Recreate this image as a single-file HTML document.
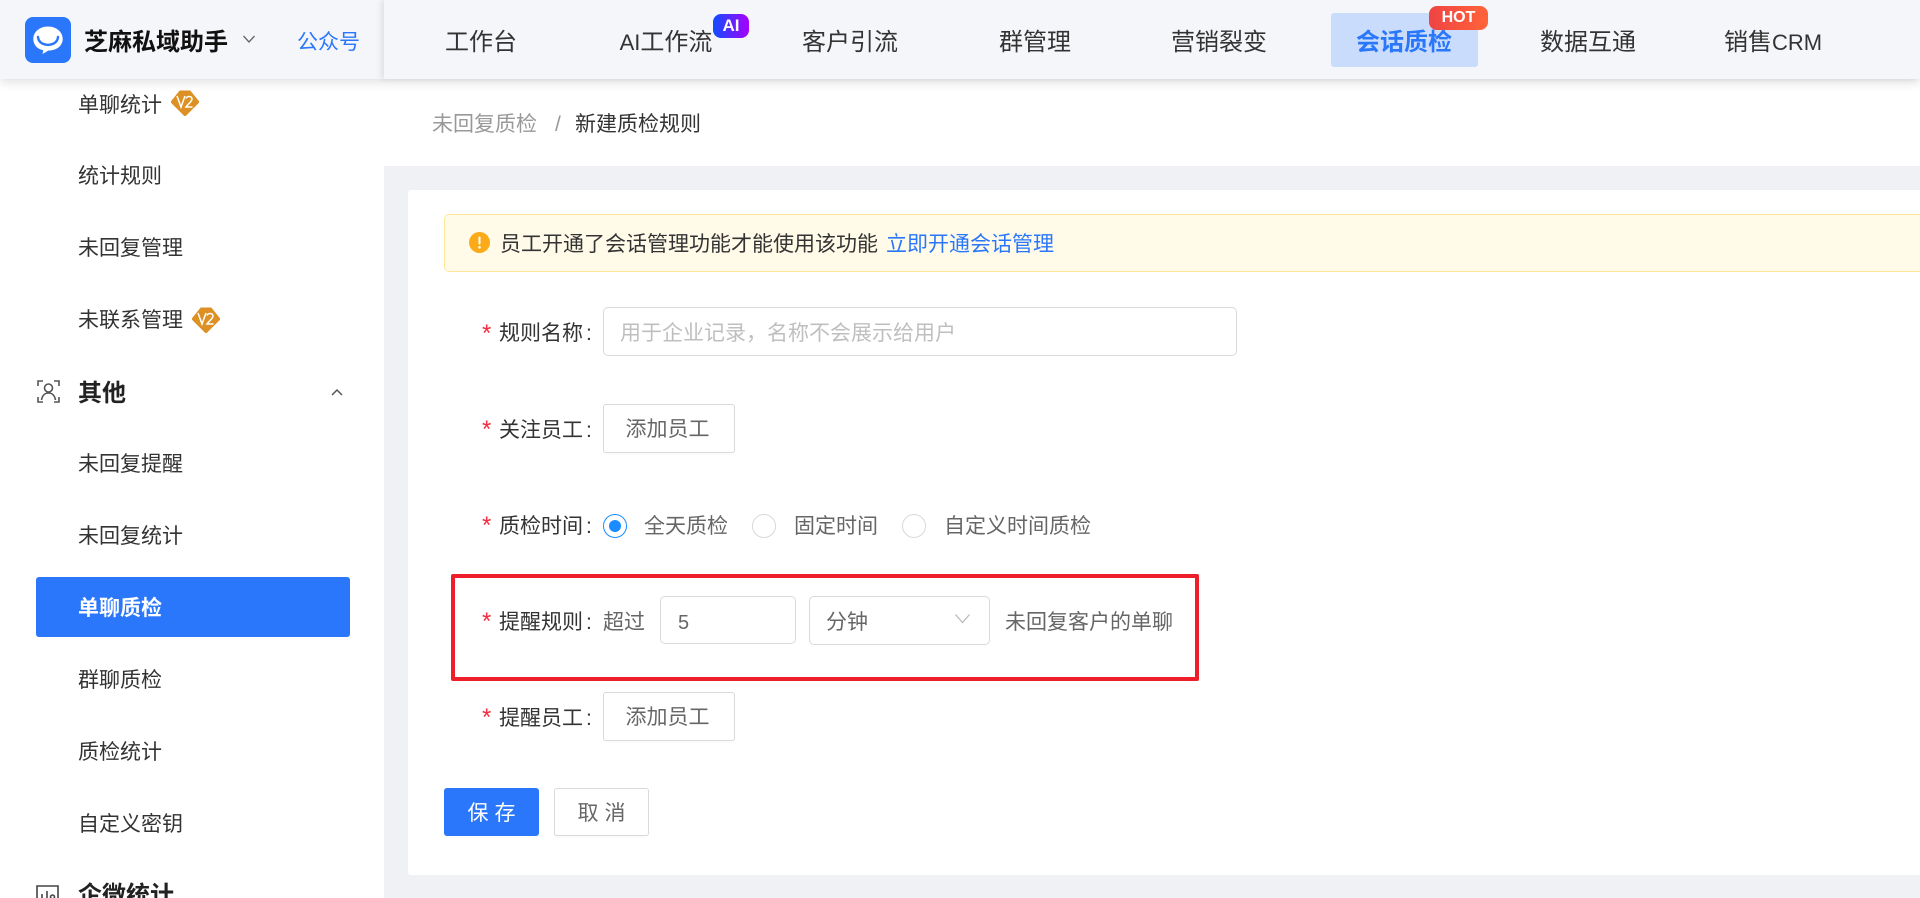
<!DOCTYPE html>
<html lang="zh">
<head>
<meta charset="utf-8">
<title>新建质检规则</title>
<style>
html,body{margin:0;padding:0;width:1920px;height:898px;overflow:hidden;background:#fff}
body{position:relative;font-family:"Liberation Sans","Noto Sans CJK SC",sans-serif;color:#333}
.t{position:absolute;white-space:nowrap;height:40px;line-height:40px;font-size:21px;margin-top:2px}
.b{position:absolute;box-sizing:border-box}
.c{text-align:center;transform:translateX(-50%)}
.nav{font-size:24px;color:#333;margin-top:1px}
.nav i{font-style:normal;font-size:22px}
.btn{position:absolute;box-sizing:border-box;background:#fff;border:1px solid #d9d9d9;border-radius:3px;color:#666;font-size:21px;text-align:center;box-shadow:0 2px 0 rgba(0,0,0,.015)}
.inp{position:absolute;box-sizing:border-box;background:#fff;border:1px solid #d9d9d9;border-radius:5px}
.star{position:absolute;color:#f5293f;font-size:24px;height:40px;line-height:47px;margin-top:-4px;font-family:"Liberation Sans",sans-serif}
.radio{position:absolute;box-sizing:border-box;width:24px;height:24px;border-radius:50%;border:1px solid #d9d9d9;background:#fff}
.l i{font-style:normal;padding-left:3px}
svg{position:absolute;display:block}
</style>
</head>
<body>

<!-- page backgrounds -->
<div class="b" style="left:384px;top:166px;width:1536px;height:732px;background:#f0f1f5"></div>
<div class="b" style="left:408px;top:190px;width:1512px;height:685px;background:#fff;border-radius:3px 0 0 3px"></div>

<!-- sidebar -->
<div class="t" style="left:78px;top:84px">单聊统计</div>
<svg style="left:171px;top:90px" width="28" height="26" viewBox="0 0 28 26"><polygon points="0,12 9,1 19,1 28,12 14,26" fill="#dd9023"/><polygon points="0,12 9,1 19,1 28,12 14,26" fill="none" stroke="#dd9023" stroke-linejoin="round" stroke-width="1"/><path d="M6 6l4 11 4-11M15 8.500c.5-2.500 6-3 6 .5 0 2.500-3.500 4.500-6 8h6.500" fill="none" stroke="#fff" stroke-width="1.500"/></svg>
<div class="t" style="left:78px;top:155px">统计规则</div>
<div class="t" style="left:78px;top:227px">未回复管理</div>
<div class="t" style="left:78px;top:299px">未联系管理</div>
<svg style="left:192px;top:307px" width="28" height="26" viewBox="0 0 28 26"><polygon points="0,12 9,1 19,1 28,12 14,26" fill="#dd9023"/><polygon points="0,12 9,1 19,1 28,12 14,26" fill="none" stroke="#dd9023" stroke-linejoin="round" stroke-width="1"/><path d="M6 6l4 11 4-11M15 8.500c.5-2.500 6-3 6 .5 0 2.500-3.500 4.500-6 8h6.500" fill="none" stroke="#fff" stroke-width="1.500"/></svg>

<svg style="left:37px;top:380px" width="23" height="23" viewBox="0 0 23 23" fill="none" stroke="#555" stroke-width="1.600"><path d="M1 6V1h5M17 1h5v5M1 17v5h5M17 22h5v-5"/><circle cx="11.500" cy="8" r="4"/><path d="M4.500 20c.8-4.500 3.500-7 7-7s6.200 2.500 7 7"/></svg>
<div class="t" style="left:78px;top:372px;font-size:24px;font-weight:700;color:#222">其他</div>
<svg style="left:330px;top:388px" width="14" height="9" viewBox="0 0 14 9" fill="none" stroke="#555" stroke-width="1.500"><path d="M2 7l5-5 5 5"/></svg>

<div class="t" style="left:78px;top:443px">未回复提醒</div>
<div class="t" style="left:78px;top:515px">未回复统计</div>
<div class="b" style="left:36px;top:577px;width:314px;height:60px;background:#2a77fb;border-radius:3px"></div>
<div class="t" style="left:78px;top:587px;color:#fff;font-weight:700">单聊质检</div>
<div class="t" style="left:78px;top:659px">群聊质检</div>
<div class="t" style="left:78px;top:731px">质检统计</div>
<div class="t" style="left:78px;top:803px">自定义密钥</div>
<svg style="left:36px;top:885px" width="23" height="22" viewBox="0 0 23 22" fill="none" stroke="#444" stroke-width="1.600"><path d="M1 21V1h21v20"/><path d="M6 9v8M11 6v11"/><circle cx="16.500" cy="12" r="2"/></svg>
<div class="t" style="left:78px;top:874px;font-size:24px;font-weight:700;color:#222">企微统计</div>

<!-- header -->
<div class="b" style="left:0;top:0;width:1920px;height:79px;background:#f5f6fa;box-shadow:0 3px 10px rgba(0,0,0,.13)"></div>
<div class="b" style="left:384px;top:0;width:1536px;height:79px;background:#f5f6fa;box-shadow:-3px 0 6px rgba(0,0,0,.09)"></div>

<svg style="left:25px;top:17px" width="46" height="46" viewBox="0 0 46 46"><rect width="46" height="46" rx="8" fill="#2a77fb"/><path d="M23 9.500C14.500 9.500 8.300 15 8.300 22c0 5.800 4 10 9.200 11 .7.100 .8 .5 .6 1.200l-.6 2.800 6-3.500C32 33.500 37.700 28.500 37.700 22 37.700 15 31.500 9.500 23 9.500z" fill="#fff"/><path d="M13 20c.7 10.500 19.300 10.500 20 0" fill="none" stroke="#2a77fb" stroke-width="2.400" stroke-linecap="round"/></svg>
<div class="t nav" style="left:84px;top:22px;font-weight:700;color:#111">芝麻私域助手</div>
<svg style="left:242px;top:34px" width="14" height="10" viewBox="0 0 14 10" fill="none" stroke="#666" stroke-width="1.300"><path d="M1.500 2l5.500 6 5.500-6"/></svg>
<div class="t" style="left:297px;top:21px;color:#2a77fb">公众号</div>

<div class="b" style="left:1331px;top:13px;width:147px;height:54px;background:#cadcfb;border-radius:3px"></div>
<div class="t nav c" style="left:481px;top:22px">工作台</div>
<div class="t nav c" style="left:666px;top:22px"><i>AI</i>工作流</div>
<div class="t nav c" style="left:850px;top:22px">客户引流</div>
<div class="t nav c" style="left:1035px;top:22px">群管理</div>
<div class="t nav c" style="left:1219px;top:22px">营销裂变</div>
<div class="t nav c" style="left:1404px;top:22px;color:#2a77fb;font-weight:700">会话质检</div>
<div class="t nav c" style="left:1588px;top:22px">数据互通</div>
<div class="t nav c" style="left:1773px;top:22px">销售<i>CRM</i></div>
<div class="b" style="left:713px;top:14px;width:36px;height:24px;line-height:23px;background:linear-gradient(90deg,#0f4dff,#a800ff);border-radius:8px;color:#fff;font-size:17px;font-weight:700;text-align:center">AI</div>
<div class="b" style="left:1429px;top:6px;width:59px;height:24px;line-height:24px;background:linear-gradient(90deg,#ef4444,#ff6339);border-radius:8px;color:#fff;font-size:16px;font-weight:700;text-align:center">HOT</div>

<!-- breadcrumb -->
<div class="t" style="left:432px;top:103px;color:#999">未回复质检</div>
<div class="t" style="left:555px;top:103px;color:#999">/</div>
<div class="t" style="left:575px;top:103px">新建质检规则</div>

<!-- alert -->
<div class="b" style="left:444px;top:214px;width:1476px;height:58px;background:#fffbe8;border:1px solid #ffe79a;border-right:0;border-radius:5px 0 0 5px"></div>
<svg style="left:469px;top:232px" width="21" height="21" viewBox="0 0 21 21"><circle cx="10.500" cy="10.500" r="10.500" fill="#fbab18"/><rect x="9.500" y="4.500" width="2" height="8" rx="1" fill="#fff"/><circle cx="10.500" cy="15.300" r="1.300" fill="#fff"/></svg>
<div class="t" style="left:500px;top:223px;color:#333">员工开通了会话管理功能才能使用该功能</div>
<div class="t" style="left:886px;top:223px;color:#2a77fb">立即开通会话管理</div>

<!-- 规则名称 -->
<div class="star" style="left:482px;top:314px">*</div>
<div class="t l" style="left:499px;top:312px">规则名称<i>:</i></div>
<div class="inp" style="left:603px;top:307px;width:634px;height:49px"></div>
<div class="t" style="left:620px;top:312px;color:#bfbfbf">用于企业记录，名称不会展示给用户</div>

<!-- 关注员工 -->
<div class="star" style="left:482px;top:410px">*</div>
<div class="t l" style="left:499px;top:409px">关注员工<i>:</i></div>
<div class="btn" style="left:603px;top:404px;width:132px;height:49px;line-height:49px;padding-right:3px">添加员工</div>

<!-- 质检时间 -->
<div class="star" style="left:482px;top:506px">*</div>
<div class="t l" style="left:499px;top:505px">质检时间<i>:</i></div>
<div class="radio" style="left:603px;top:514px;border-color:#1a8cff"></div>
<div class="b" style="left:609px;top:520px;width:12px;height:12px;border-radius:50%;background:#1a8cff"></div>
<div class="t" style="left:644px;top:505px;color:#666">全天质检</div>
<div class="radio" style="left:752px;top:514px"></div>
<div class="t" style="left:794px;top:505px;color:#666">固定时间</div>
<div class="radio" style="left:902px;top:514px"></div>
<div class="t" style="left:944px;top:505px;color:#666">自定义时间质检</div>

<!-- 提醒规则 -->
<div class="b" style="left:451px;top:574px;width:748px;height:107px;border:4px solid #ee1f2b;border-radius:2px"></div>
<div class="star" style="left:482px;top:602px">*</div>
<div class="t l" style="left:499px;top:601px">提醒规则<i>:</i></div>
<div class="t" style="left:603px;top:601px;color:#666">超过</div>
<div class="inp" style="left:660px;top:596px;width:136px;height:48px"></div>
<div class="t" style="left:678px;top:601px;color:#666;font-size:20px">5</div>
<div class="inp" style="left:809px;top:596px;width:181px;height:49px"></div>
<div class="t" style="left:826px;top:601px;color:#666">分钟</div>
<svg style="left:954px;top:613px" width="17" height="11" viewBox="0 0 17 11" fill="none" stroke="#bbb" stroke-width="1.300"><path d="M1.500 1.500l7 8 7-8"/></svg>
<div class="t" style="left:1005px;top:601px;color:#666">未回复客户的单聊</div>

<!-- 提醒员工 -->
<div class="star" style="left:482px;top:698px">*</div>
<div class="t l" style="left:499px;top:697px">提醒员工<i>:</i></div>
<div class="btn" style="left:603px;top:692px;width:132px;height:49px;line-height:49px;padding-right:3px">添加员工</div>

<!-- actions -->
<div class="btn" style="left:444px;top:788px;width:95px;height:48px;line-height:49px;background:#2a77fb;border-color:#2a77fb;color:#fff;letter-spacing:6px;padding-left:6px">保存</div>
<div class="btn" style="left:554px;top:788px;width:95px;height:48px;line-height:49px;letter-spacing:6px;padding-left:6px">取消</div>

</body>
</html>
